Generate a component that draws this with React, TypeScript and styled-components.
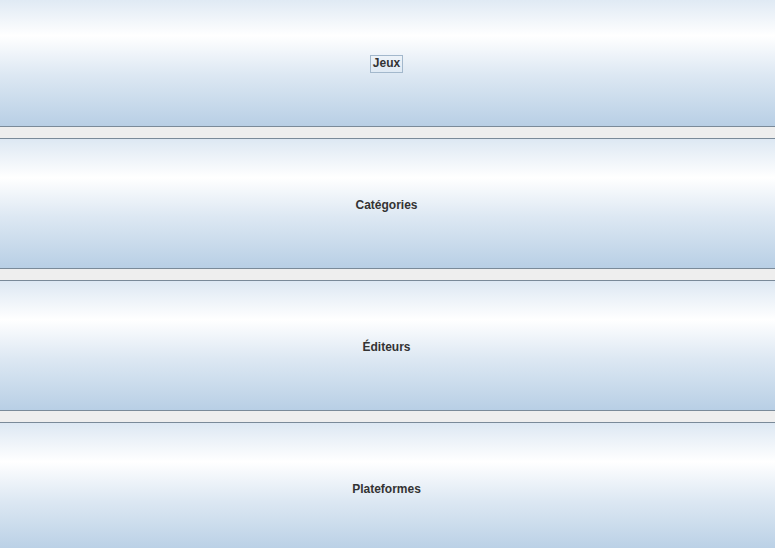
import styled, { createGlobalStyle } from "styled-components";

const GlobalStyle = createGlobalStyle`
  html, body {
    margin: 0;
    padding: 0;
    background: #eeeeee;
    overflow: hidden;
  }
  body {
    font-family: "Liberation Sans", Arial, sans-serif;
  }
`;

const Menu = styled.div`
  display: flex;
  flex-direction: column;
  gap: 11px;
  margin-top: -4px;
  height: 552px;
  overflow: hidden;
`;

const MenuButton = styled.button`
  flex: 0 0 131px;
  box-sizing: border-box;
  height: 131px;
  width: 100%;
  margin: 0;
  padding: 4px 2px 0 0;
  border: none;
  border-top: 1px solid #7a8a99;
  border-bottom: 1px solid #7a8a99;
  background: linear-gradient(
    to bottom,
    #dde8f3 0%,
    #ffffff 30%,
    #dde8f3 60%,
    #b8cfe5 100%
  );
  color: #333333;
  font-family: "Liberation Sans", Arial, sans-serif;
  font-weight: bold;
  font-size: 12px;
  display: flex;
  align-items: center;
  justify-content: center;
  cursor: pointer;
`;

const Label = styled.span<{ $focused?: boolean }>`
  display: inline-block;
  padding: 1px 2px 2px;
  line-height: 13px;
  outline: ${(p) => (p.$focused ? "1px solid #a3b8cc" : "none")};
`;

const items = ["Jeux", "Catégories", "Éditeurs", "Plateformes"];

function App() {
  return (
    <>
      <GlobalStyle />
      <Menu>
        {items.map((label, i) => (
          <MenuButton key={label}>
            <Label $focused={i === 0}>{label}</Label>
          </MenuButton>
        ))}
      </Menu>
    </>
  );
}

export default App;
